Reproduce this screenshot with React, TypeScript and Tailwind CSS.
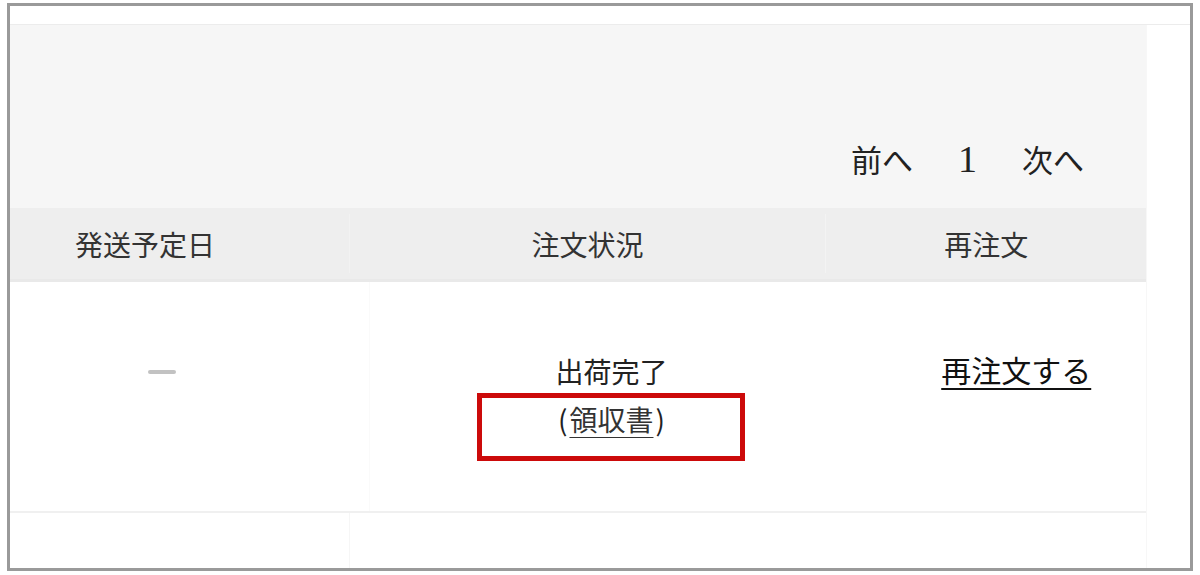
import React from "react";

const jp = "font-['Noto_Sans_CJK_JP','Noto_Sans',sans-serif]";

function Pager() {
  return (
    <div className="h-[183px] bg-[#f6f6f6] flex items-end justify-end pr-[62px] pb-[32px]">
      <div className="flex items-center gap-[45px] text-[31px] leading-[34px] text-[#222]">
        <span>前へ</span>
        <span className="font-['Liberation_Serif',serif] text-[38px]">1</span>
        <span>次へ</span>
      </div>
    </div>
  );
}

function HeaderRow() {
  return (
    <div className="flex h-[74px] bg-[#eeeeee] border-b-[3px] border-[#e9e9e9] text-[28px] text-[#333]">
      <div className="w-[340px] flex items-center pl-[65px] border-r border-[#f2f2f2] my-[6px]">
        発送予定日
      </div>
      <div className="w-[477px] flex items-center justify-center border-r border-[#f3f3f3] my-[6px]">
        注文状況
      </div>
      <div className="w-[320px] flex items-center justify-center">再注文</div>
    </div>
  );
}

function OrderRow() {
  return (
    <div className="flex h-[231px] border-b-[2px] border-[#f0f0f0] text-[28px] text-[#222]">
      {/* shipping date */}
      <div className="w-[360px] pl-[138px] pt-[88px] border-r border-[#fafafa]">
        <div className="w-[28px] h-[4px] rounded-full bg-[#c2c2c2]" />
      </div>

      {/* status */}
      <div className="w-[480px] pt-[65px] flex flex-col items-center leading-[48px] pl-[4px]">
        <span>出荷完了</span>
        <span className="relative">
          <span className="mr-[2px]">(</span>
          <a href="#" className="underline underline-offset-[6px] decoration-[1px] text-[#333]">領収書</a>
          <span className="ml-[2px]">)</span>
          <span className="absolute left-1/2 -translate-x-1/2 top-[-2px] w-[268px] h-[68px] border-[5px] border-[#cc0a0a]" />
        </span>
      </div>

      {/* reorder */}
      <div className="w-[297px] pt-[63px] pl-[92px] leading-[48px]">
        <a href="#" className="text-[30px] underline underline-offset-[6px] decoration-[2px] text-[#111]">
          再注文する
        </a>
      </div>
    </div>
  );
}

export default function App() {
  return (
    <div className={`w-[1200px] h-[575px] bg-white overflow-hidden pt-[3px] pl-[7px] ${jp}`}>
      <div className="w-[1186px] h-[568px] border-[3px] border-[#9a9a9a] bg-white overflow-hidden">
        <div className="h-[19px] border-b border-[#ececec]" />
        <div className="w-[1137px] border-r border-[#f7f7f7]">
          <Pager />
          <HeaderRow />
          <OrderRow />
          <div className="flex h-[60px]">
            <div className="w-[340px] border-r border-[#f6f6f6]" />
            <div className="flex-1" />
          </div>
        </div>
      </div>
    </div>
  );
}
